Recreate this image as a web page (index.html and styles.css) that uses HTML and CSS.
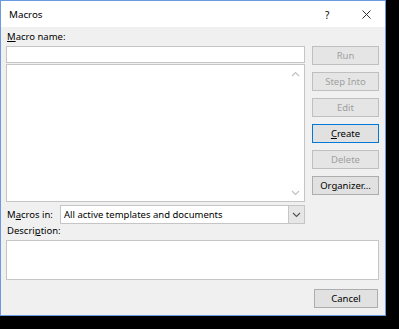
FILE: index.html
```html
<!DOCTYPE html>
<html lang="en">
<head>
    <meta charset="UTF-8">
    <title>Macros</title>
    <link rel="stylesheet" href="styles.css">
</head>
<body>
<div class="dialog">
    <div class="titlebar">
        <div class="title">Macros</div>
        <div class="title-help">?</div>
        <div class="title-close">
            <svg width="9" height="9" viewBox="0 0 9 9"><path d="M0.5 0.5L8.5 8.5M8.5 0.5L0.5 8.5" stroke="#333" stroke-width="1" fill="none"/></svg>
        </div>
    </div>

    <div class="content">
        <div class="main">
            <div class="left">
                <div class="label"><u>M</u>acro name:</div>
                <div class="textbox"></div>
                <div class="listbox">
                    <div class="list-items"></div>
                    <div class="scrollbar">
                        <svg width="9" height="6" viewBox="0 0 9 6"><path d="M1 5L4.5 1.5L8 5" stroke="#c2c2c2" stroke-width="1.2" fill="none"/></svg>
                        <svg width="9" height="6" viewBox="0 0 9 6"><path d="M1 1L4.5 4.5L8 1" stroke="#c2c2c2" stroke-width="1.2" fill="none"/></svg>
                    </div>
                </div>
                <div class="macros-in">
                    <div class="label">M<u>a</u>cros in:</div>
                    <div class="select">
                        <div class="select-value">All active templates and documents</div>
                        <div class="select-arrow">
                            <svg width="9" height="6" viewBox="0 0 9 6"><path d="M1 1L4.5 4.5L8 1" stroke="#555" stroke-width="1.2" fill="none"/></svg>
                        </div>
                    </div>
                </div>
            </div>

            <div class="buttons">
                <div class="btn disabled">Run</div>
                <div class="btn disabled">Step Into</div>
                <div class="btn disabled">Edit</div>
                <div class="btn focused"><u>C</u>reate</div>
                <div class="btn disabled">Delete</div>
                <div class="btn">Or<u>g</u>anizer...</div>
            </div>
        </div>

        <div class="label desc-label">Descri<u>p</u>tion:</div>
        <div class="description"></div>

        <div class="footer">
            <div class="btn">Cancel</div>
        </div>
    </div>
</div>
</body>
</html>
```

FILE: styles.css
```css
body {
    margin: 0;
    padding: 0;
    background: #000;
    font-family: 'Noto Sans', sans-serif;
    font-size: 9.5px;
    color: #000;
}

.dialog {
    width: 384px;
    height: 314px;
    border: 1px solid #6a9ae2;
    background: #f0f0f0;
}

.titlebar {
    height: 26px;
    background: #fff;
    display: flex;
    align-items: center;
}

.title {
    flex: 1;
    padding-left: 8px;
    padding-top: 1px;
    font-size: 9.8px;
}

.title-help {
    width: 5px;
    margin-right: 32px;
    font-size: 10px;
    padding-top: 1px;
}

.title-close {
    width: 9px;
    height: 9px;
    margin-right: 14px;
    display: flex;
}

.content {
    padding: 0 6px 0 5px;
}

.main {
    display: grid;
    grid-template-columns: 299px 67px;
    column-gap: 7px;
}

.left {
    display: flex;
    flex-direction: column;
}

.label {
    height: 19px;
    line-height: 19px;
    padding-left: 1px;
    white-space: nowrap;
}

.textbox {
    height: 15px;
    background: #fff;
    border: 1px solid #c5c5c5;
}

.listbox {
    margin-top: 1px;
    height: 136px;
    background: #fff;
    border: 1px solid #c5c5c5;
    display: flex;
}

.list-items {
    flex: 1;
}

.scrollbar {
    width: 17px;
    display: flex;
    flex-direction: column;
    justify-content: space-between;
    align-items: center;
    padding: 6px 0 5px;
}

.macros-in {
    margin-top: 3px;
    display: flex;
    align-items: center;
}

.macros-in .label {
    width: 53px;
}

.select {
    flex: 1;
    height: 17px;
    background: #fff;
    border: 1px solid #c5c5c5;
    display: flex;
    align-items: center;
}

.select-value {
    flex: 1;
    padding-left: 3px;
    white-space: nowrap;
    overflow: hidden;
}

.select-arrow {
    width: 15px;
    height: 17px;
    background: #e6e6e6;
    border-left: 1px solid #c5c5c5;
    display: flex;
    align-items: center;
    justify-content: center;
}

.buttons {
    padding-top: 19px;
    display: flex;
    flex-direction: column;
    gap: 7px;
}

.btn {
    height: 17px;
    line-height: 17px;
    background: #e1e1e1;
    border: 1px solid #adadad;
    text-align: center;
    white-space: nowrap;
}

.btn.disabled {
    border-color: #bfbfbf;
    color: #a0a0a0;
    background: #e5e5e5;
}

.btn.focused {
    border-color: #0078d7;
    box-shadow: inset 0 0 0 1px #e1e1e1;
}

.desc-label {
    height: 16px;
    line-height: 14px;
}

.description {
    height: 38px;
    background: #fff;
    border: 1px solid #c5c5c5;
}

.footer {
    margin-top: 9px;
    display: flex;
    justify-content: flex-end;
}

.footer .btn {
    width: 62px;
    margin-right: 1px;
}
```
